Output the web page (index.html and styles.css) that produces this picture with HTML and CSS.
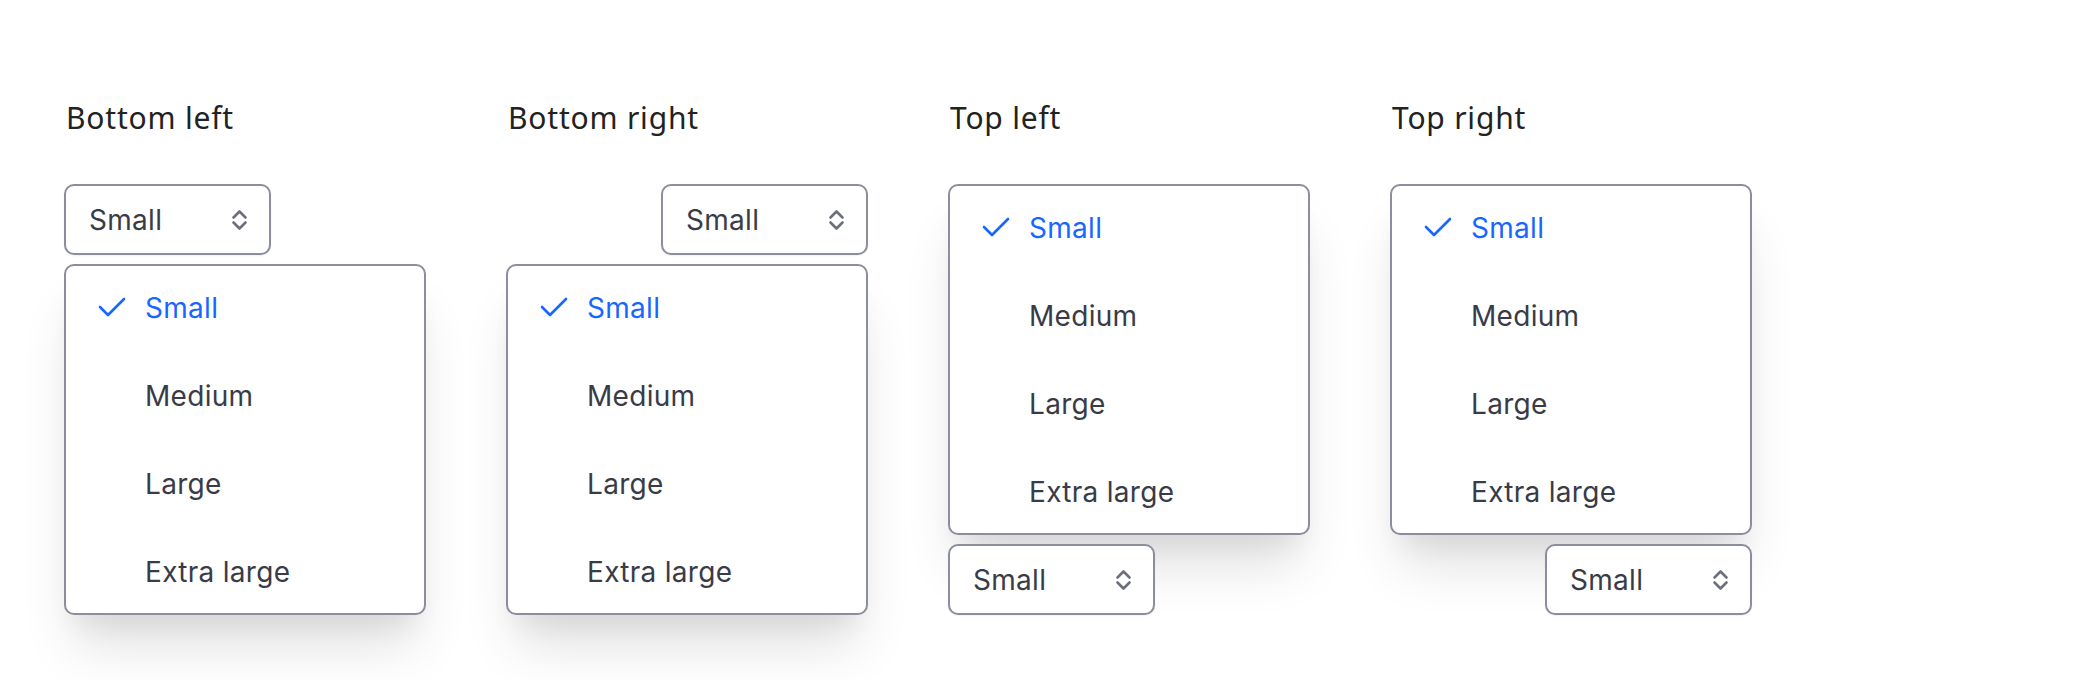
FILE: index.html
```html
<!DOCTYPE html>
<html>
<head>
<meta charset="utf-8">
<link rel="stylesheet" href="styles.css">
</head>
<body>
<div class="page">
  <section class="col">
    <h2 class="title">Bottom left</h2>
    <div class="stage">
      <button class="select"><span>Small</span><svg class="chev" viewBox="0 0 17 24"><path d="M2.5 9.5 L8.5 3.5 L14.5 9.5 M2.5 14.5 L8.5 20.5 L14.5 14.5"/></svg></button>
      <ul class="menu">
        <li class="item sel"><svg class="check" viewBox="0 0 28 20"><path d="M2 10 L10 18 L26 2"/></svg>Small</li>
        <li class="item">Medium</li>
        <li class="item">Large</li>
        <li class="item">Extra large</li>
      </ul>
    </div>
  </section>
  <section class="col">
    <h2 class="title">Bottom right</h2>
    <div class="stage right">
      <button class="select"><span>Small</span><svg class="chev" viewBox="0 0 17 24"><path d="M2.5 9.5 L8.5 3.5 L14.5 9.5 M2.5 14.5 L8.5 20.5 L14.5 14.5"/></svg></button>
      <ul class="menu">
        <li class="item sel"><svg class="check" viewBox="0 0 28 20"><path d="M2 10 L10 18 L26 2"/></svg>Small</li>
        <li class="item">Medium</li>
        <li class="item">Large</li>
        <li class="item">Extra large</li>
      </ul>
    </div>
  </section>
  <section class="col">
    <h2 class="title">Top left</h2>
    <div class="stage">
      <ul class="menu">
        <li class="item sel"><svg class="check" viewBox="0 0 28 20"><path d="M2 10 L10 18 L26 2"/></svg>Small</li>
        <li class="item">Medium</li>
        <li class="item">Large</li>
        <li class="item">Extra large</li>
      </ul>
      <button class="select"><span>Small</span><svg class="chev" viewBox="0 0 17 24"><path d="M2.5 9.5 L8.5 3.5 L14.5 9.5 M2.5 14.5 L8.5 20.5 L14.5 14.5"/></svg></button>
    </div>
  </section>
  <section class="col">
    <h2 class="title">Top right</h2>
    <div class="stage right">
      <ul class="menu">
        <li class="item sel"><svg class="check" viewBox="0 0 28 20"><path d="M2 10 L10 18 L26 2"/></svg>Small</li>
        <li class="item">Medium</li>
        <li class="item">Large</li>
        <li class="item">Extra large</li>
      </ul>
      <button class="select"><span>Small</span><svg class="chev" viewBox="0 0 17 24"><path d="M2.5 9.5 L8.5 3.5 L14.5 9.5 M2.5 14.5 L8.5 20.5 L14.5 14.5"/></svg></button>
    </div>
  </section>
</div>
</body>
</html>
```

FILE: styles.css
```css
html, body {
  margin: 0;
  padding: 0;
  background: #ffffff;
}
body {
  font-family: Inter, "Noto Sans", sans-serif;
}
.page {
  box-sizing: border-box;
  min-height: 680px;
  display: flex;
  align-items: flex-start;
  gap: 80px;
  padding: 98px 0 0 64px;
}
.col {
  width: 362px;
  display: flex;
  flex-direction: column;
}
.title {
  margin: 0 0 46px 2px;
  font-family: "Noto Sans", sans-serif;
  font-weight: 400;
  font-size: 30px;
  line-height: 40px;
  color: #222222;
  letter-spacing: 0.8px;
}
.stage {
  display: flex;
  flex-direction: column;
  align-items: flex-start;
  gap: 9px;
}
.stage.right {
  align-items: flex-end;
}
.select {
  box-sizing: border-box;
  width: 207px;
  height: 71px;
  border: 2px solid #8b8e9c;
  border-radius: 10px;
  background: #fff;
  display: flex;
  align-items: center;
  justify-content: space-between;
  padding: 0 21px 0 23px;
  font-family: Inter, "Noto Sans", sans-serif;
  font-size: 28px;
  letter-spacing: 0.3px;
  color: #393b47;
  box-shadow: 0 1px 2px rgba(0,0,0,0.06);
}
.chev {
  width: 17px;
  height: 24px;
  fill: none;
  stroke: #6c6f7d;
  stroke-width: 2.6;
  stroke-linecap: round;
  stroke-linejoin: round;
}
.menu {
  box-sizing: border-box;
  list-style: none;
  margin: 0;
  padding: 0;
  width: 362px;
  height: 351px;
  border: 2px solid #8b8e9c;
  border-radius: 10px;
  background: #fff;
  box-shadow: 0 40px 50px -10px rgba(0,0,0,0.12), 0 20px 24px -10px rgba(0,0,0,0.06);
}
.item {
  position: relative;
  box-sizing: border-box;
  height: 88px;
  padding-bottom: 4px;
  display: flex;
  align-items: center;
  padding-left: 79px;
  font-size: 28px;
  letter-spacing: 0.3px;
  color: #393b47;
}
.item.sel {
  color: #1766ff;
}
.check {
  position: absolute;
  left: 32px;
  top: 31px;
  width: 28px;
  height: 20px;
  fill: none;
  stroke: #1766ff;
  stroke-width: 2.6;
  stroke-linecap: round;
  stroke-linejoin: round;
}
```
